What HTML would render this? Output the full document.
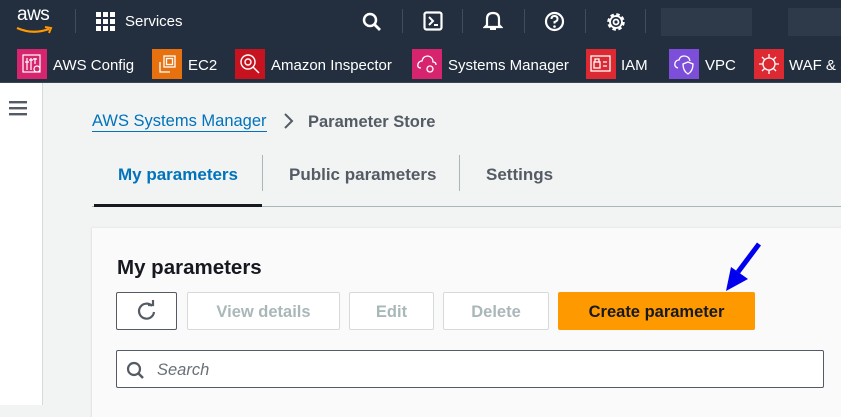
<!DOCTYPE html>
<html><head><meta charset="utf-8"><style>
*{box-sizing:border-box;margin:0;padding:0}
body{width:841px;height:405px;overflow:hidden;background:#f2f3f3;font-family:"Liberation Sans","DejaVu Sans",sans-serif;position:relative}
.top{position:absolute;left:0;top:0;width:841px;height:42px;background:#232f3e}
.fav{position:absolute;left:0;top:42px;width:841px;height:41px;background:#232f3e;border-bottom:1px solid #3b4656}
.t{position:absolute;color:#fff;font-size:15px;white-space:nowrap}
.sep{position:absolute;top:9px;width:1px;height:24px;background:#414d5c}
.ic{position:absolute;top:49px;width:30px;height:30px}
.side{position:absolute;left:0;top:83px;width:43px;height:322px;background:#fff;border-right:1px solid #d5dbdb}
.card{position:absolute;left:92px;top:227px;width:760px;height:190px;background:#fafafa;box-shadow:0 1px 2px rgba(0,0,0,.15);border-top:1px solid #eaeded}
.btn{position:absolute;top:292px;height:38px;border:1px solid #d5dbdb;border-radius:2px;background:#fff;color:#aab7b8;font-weight:bold;font-size:16.5px;text-align:center;line-height:38px}
</style></head><body>
<div class="top">
 <div class="t" style="left:17px;top:4px;font-size:19px;letter-spacing:-.5px">aws</div>
 <svg style="position:absolute;left:15px;top:26px" width="40" height="9"><path d="M2 2 Q18 9 34 3" stroke="#f90" stroke-width="2.2" fill="none"/><path d="M30 1 L36 2 L34 7" stroke="#f90" stroke-width="2" fill="none"/></svg>
 <div class="sep" style="left:75px"></div>
 <svg style="position:absolute;left:96px;top:12px" width="20" height="19" fill="#fff"><rect x="0" y="0" width="5" height="5"/><rect x="7" y="0" width="5" height="5"/><rect x="14" y="0" width="5" height="5"/><rect x="0" y="7" width="5" height="5"/><rect x="7" y="7" width="5" height="5"/><rect x="14" y="7" width="5" height="5"/><rect x="0" y="14" width="5" height="5"/><rect x="7" y="14" width="5" height="5"/><rect x="14" y="14" width="5" height="5"/></svg>
 <div class="t" style="left:125px;top:13px">Services</div>
 <svg style="position:absolute;left:362px;top:12px" width="20" height="20"><circle cx="8" cy="8" r="6" stroke="#fff" stroke-width="2.5" fill="none"/><path d="M12.5 12.5 L18 18" stroke="#fff" stroke-width="2.8"/></svg>
 <div class="sep" style="left:402px"></div>
 <svg style="position:absolute;left:423px;top:11px" width="20" height="20"><rect x="1.5" y="1.5" width="17" height="17" rx="2" stroke="#fff" stroke-width="2.2" fill="none"/><path d="M6 6 L10 10 L6 14 M11 14 L15 14" stroke="#fff" stroke-width="2" fill="none"/></svg>
 <div class="sep" style="left:462px"></div>
 <svg style="position:absolute;left:483px;top:10px" width="20" height="22"><path d="M4 15 L4 9 Q4 3 10 3 Q16 3 16 9 L16 15 L18 17 L2 17 Z" stroke="#fff" stroke-width="2.2" fill="none"/><path d="M7 19 L13 19" stroke="#fff" stroke-width="2"/></svg>
 <div class="sep" style="left:524px"></div>
 <svg style="position:absolute;left:544px;top:11px" width="21" height="21"><circle cx="10.5" cy="10.5" r="8.5" stroke="#fff" stroke-width="2.2" fill="none"/><path d="M7.5 8 Q7.5 5 10.5 5 Q13.5 5 13.5 8 Q13.5 10 10.5 11 L10.5 12.5" stroke="#fff" stroke-width="2" fill="none"/><circle cx="10.5" cy="15.5" r="1.3" fill="#fff"/></svg>
 <div class="sep" style="left:585px"></div>
 <svg style="position:absolute;left:605px;top:11px" width="22" height="22"><circle cx="11" cy="11" r="7" stroke="#fff" stroke-width="3.5" stroke-dasharray="3.2 2.3" fill="none"/><circle cx="11" cy="11" r="6" stroke="#fff" stroke-width="1.8" fill="none"/><circle cx="11" cy="11" r="2.5" stroke="#fff" stroke-width="1.8" fill="none"/></svg>
 <div class="sep" style="left:645px"></div>
 <div style="position:absolute;left:661px;top:8px;width:91px;height:28px;background:#2e3a49"></div>
 <div style="position:absolute;left:788px;top:8px;width:53px;height:28px;background:#2e3a49"></div>
</div>
<div class="fav">
 <div class="ic" style="left:17px;top:7px;background:#d6246e"></div>
 <svg style="position:absolute;left:22px;top:12px" width="20" height="20" stroke="#fff" fill="none" stroke-width="1.2"><rect x="1" y="1" width="17" height="17"/><path d="M5 4 V16 M9 4 V16 M13 4 V10 M3 8 H7 M7 6 H11 M11 5 H15"/><circle cx="15" cy="15" r="3"/></svg>
 <div class="t" style="left:53px;top:15px">AWS Config</div>
 <div class="ic" style="left:152px;top:7px;background:#e7700f"></div>
 <svg style="position:absolute;left:157px;top:12px" width="20" height="20" stroke="#fff" fill="none" stroke-width="1.3"><rect x="7" y="2" width="11" height="11"/><path d="M3 8 V18 H13"/><rect x="9.5" y="4.5" width="6" height="6"/></svg>
 <div class="t" style="left:188px;top:15px">EC2</div>
 <div class="ic" style="left:235px;top:7px;background:#c7131f"></div>
 <svg style="position:absolute;left:239px;top:11px" width="22" height="22" stroke="#fff" fill="none" stroke-width="1.4"><circle cx="9" cy="9" r="7"/><circle cx="9" cy="9" r="3"/><path d="M14 14 L20 20"/></svg>
 <div class="t" style="left:271px;top:15px">Amazon Inspector</div>
 <div class="ic" style="left:412px;top:7px;background:#d6246e"></div>
 <svg style="position:absolute;left:416px;top:11px" width="22" height="22" stroke="#fff" fill="none" stroke-width="1.3"><path d="M5 15 Q1 15 2 11 Q3 8 6 8 Q7 3 12 3 Q17 4 17 9 Q20 9 20 12"/><circle cx="14" cy="16" r="3"/></svg>
 <div class="t" style="left:448px;top:15px">Systems Manager</div>
 <div class="ic" style="left:586px;top:7px;background:#dd2a32"></div>
 <svg style="position:absolute;left:590px;top:12px" width="22" height="20" stroke="#fff" fill="none" stroke-width="1.3"><rect x="1" y="2" width="19" height="15"/><rect x="4" y="8" width="6" height="6"/><path d="M5 8 V5 H9 V8 M13 8 H17 M13 12 H17"/></svg>
 <div class="t" style="left:621px;top:15px">IAM</div>
 <div class="ic" style="left:669px;top:7px;background:#7d4ed9"></div>
 <svg style="position:absolute;left:673px;top:11px" width="22" height="22" stroke="#fff" fill="none" stroke-width="1.3"><path d="M5 15 Q1 14 2 10 Q3 7 6 7 Q7 3 11 3 Q16 3 17 8"/><path d="M10 11 L15 9 L20 11 Q20 18 15 21 Q10 18 10 11Z"/></svg>
 <div class="t" style="left:705px;top:15px">VPC</div>
 <div class="ic" style="left:754px;top:7px;background:#dd2a32"></div>
 <svg style="position:absolute;left:758px;top:11px" width="22" height="22" stroke="#fff" fill="none" stroke-width="1.3"><circle cx="11" cy="11" r="6"/><path d="M11 1 V5 M11 17 V21 M1 11 H5 M17 11 H21 M4 4 L7 7 M15 15 L18 18 M18 4 L15 7 M4 18 L7 15"/></svg>
 <div class="t" style="left:789px;top:15px">WAF &amp; S</div>
</div>
<div class="side"><svg style="position:absolute;left:9px;top:18px" width="19" height="15" fill="#545b64"><rect y="0" width="18" height="2.4"/><rect y="6" width="18" height="2.4"/><rect y="12" width="18" height="2.4"/></svg></div>
<div style="position:absolute;left:92px;top:112px;font-size:16.5px;color:#0073bb;border-bottom:1px solid #0073bb;line-height:19px">AWS Systems Manager</div>
<svg style="position:absolute;left:283px;top:112px" width="12" height="18"><path d="M2 2 L9 9 L2 16" stroke="#545b64" stroke-width="2" fill="none"/></svg>
<div style="position:absolute;left:308px;top:113px;font-size:16.5px;color:#545b64;font-weight:bold">Parameter Store</div>
<div style="position:absolute;left:118px;top:165px;font-size:17px;color:#0073bb;font-weight:bold">My parameters</div>
<div style="position:absolute;left:262px;top:155px;width:1px;height:36px;background:#aab7b8"></div>
<div style="position:absolute;left:289px;top:165px;font-size:17px;color:#545b64;font-weight:bold">Public parameters</div>
<div style="position:absolute;left:459px;top:155px;width:1px;height:36px;background:#aab7b8"></div>
<div style="position:absolute;left:486px;top:165px;font-size:17px;color:#545b64;font-weight:bold">Settings</div>
<div style="position:absolute;left:92px;top:206px;width:749px;height:1px;background:#aab7b8"></div>
<div style="position:absolute;left:94px;top:204px;width:168px;height:3px;background:#16191f"></div>
<div class="card"></div>
<div style="position:absolute;left:117px;top:256px;font-size:20.5px;font-weight:bold;color:#16191f">My parameters</div>
<div class="btn" style="left:116px;width:61px;border-color:#545b64"></div>
<svg style="position:absolute;left:136px;top:300px" width="22" height="22"><path d="M16 6 A7.5 7.5 0 1 0 18 12" stroke="#545b64" stroke-width="2.2" fill="none"/><path d="M12 5 L17 5 L17 0" stroke="#545b64" stroke-width="2.2" fill="none"/></svg>
<div class="btn" style="left:187px;width:153px">View details</div>
<div class="btn" style="left:349px;width:85px">Edit</div>
<div class="btn" style="left:443px;width:106px">Delete</div>
<div class="btn" style="left:558px;width:197px;background:#ff9900;border-color:#ff9900;color:#16191f">Create parameter</div>
<svg style="position:absolute;left:718px;top:240px" width="46" height="55"><path d="M41 4 L20 32" stroke="#0000ee" stroke-width="5"/><path d="M8 51 L13 27 L30 39 Z" fill="#0000ee"/></svg>
<div style="position:absolute;left:116px;top:350px;width:708px;height:38px;background:#fff;border:1px solid #545b64;border-radius:2px"></div>
<svg style="position:absolute;left:126px;top:361px" width="20" height="20"><circle cx="8" cy="8" r="6" stroke="#545b64" stroke-width="2.2" fill="none"/><path d="M12 12 L17 17" stroke="#545b64" stroke-width="2.5"/></svg>
<div style="position:absolute;left:157px;top:361px;font-size:16.5px;font-style:italic;color:#687078">Search</div>
</body></html>
